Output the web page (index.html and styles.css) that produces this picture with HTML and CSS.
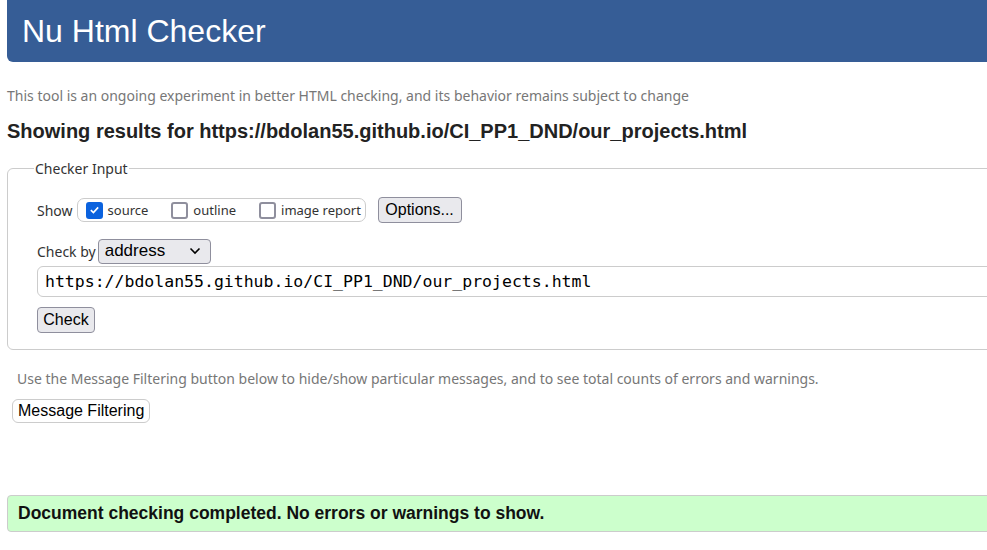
FILE: index.html
```html
<!DOCTYPE html>
<html>
<head>
<meta charset="utf-8">
<link rel="stylesheet" href="styles.css">
</head>
<body>
<div class="page">
  <h1 class="banner">Nu Html Checker</h1>
  <p class="tagline">This tool is an ongoing experiment in better HTML checking, and its behavior remains subject to change</p>
  <h2 class="results">Showing results for https://bdolan55.github.io/CI_PP1_DND/our_projects.html</h2>
  <fieldset class="input">
    <legend>Checker Input</legend>
    <div class="row show-row">
      <span class="lbl">Show</span>
      <div class="pill">
        <label class="opt"><span class="cb checked"><svg viewBox="0 0 16 16" width="16" height="16"><path d="M3.5 8.2 L6.7 11.2 L12.5 4.8" fill="none" stroke="#fff" stroke-width="2"/></svg></span>source</label>
        <label class="opt o2"><span class="cb"></span>outline</label>
        <label class="opt o3"><span class="cb"></span>image report</label>
      </div>
      <button class="btn options">Options...</button>
    </div>
    <div class="row by-row">
      <span class="lbl">Check by</span>
      <div class="select">address<svg class="chev" viewBox="0 0 12 8" width="12" height="8"><path d="M1.5 1.5 L6 6 L10.5 1.5" fill="none" stroke="#000" stroke-width="1.6"/></svg></div>
    </div>
    <div class="url">https://bdolan55.github.io/CI_PP1_DND/our_projects.html</div>
    <button class="btn check">Check</button>
  </fieldset>
  <p class="hint">Use the Message Filtering button below to hide/show particular messages, and to see total counts of errors and warnings.</p>
  <button class="filter">Message Filtering</button>
  <div class="success">Document checking completed. No errors or warnings to show.</div>
</div>
</body>
</html>
```
FILE: styles.css
```css
html, body { margin: 0; padding: 0; background: #fff; overflow: hidden; }
body { font-family: "Liberation Sans", Arial, sans-serif; }
.page { width: 1100px; padding-left: 7px; }
.banner {
  margin: -2px 0 0; height: 64px; box-sizing: border-box;
  background: #365d96; color: #fff; font-weight: normal;
  font-size: 32px; line-height: 66px; padding-left: 15px;
  border-radius: 0 0 6px 6px;
}
.tagline {
  margin: 24px 0 0; color: #777; font-family: "Noto Sans", sans-serif;
  font-size: 14px; line-height: 20px;
}
.results { margin: 12px 0 0; font-size: 20px; line-height: 26px; color: #222; }
.input {
  margin: 15px 0 0; border: 1px solid #ccc; border-radius: 6px;
  padding: 4px 0 16px 29px; min-width: 0;
}
.input legend {
  font-family: "Noto Sans", sans-serif; font-size: 14px; color: #333; padding: 0 1px; margin-left: -3px;
}
.row { display: flex; align-items: center; font-family: "Noto Sans", sans-serif; font-size: 14px; color: #333; }
.show-row { height: 28px; margin-top: 14px; }
.lbl { margin-right: 4px; white-space: nowrap; }
.pill {
  display: flex; align-items: center; height: 22px; border: 1px solid #ccc; border-radius: 7px;
  padding: 0 8px; white-space: nowrap; width: 271px; box-sizing: content-box;
}
.opt { display: flex; align-items: center; font-size: 13px; color: #333; white-space: nowrap; flex: none; }
.opt.o2 { margin-left: 23px; }
.opt.o3 { margin-left: 23px; }
.cb {
  width: 13px; height: 13px; border: 2px solid #8f8f9d; border-radius: 3px; margin-right: 5px;
  display: inline-flex; align-items: center; justify-content: center; flex: none;
}
.cb.checked { background: #0b62de; border-color: #0b62de; }
.cb svg { width: 14px; height: 14px; }
.btn {
  font-family: "Liberation Sans", Arial, sans-serif; font-size: 16px; color: #000;
  background: #e9e9ed; border: 1px solid #8f8f9d; border-radius: 4px; padding: 0 6px;
}
.options { margin-left: 12px; height: 26px; width: 84px; }
.by-row { margin-top: 14px; height: 26px; }
.by-row .lbl { margin-right: 2px; }
.select {
  display: flex; align-items: center; justify-content: space-between; box-sizing: border-box;
  width: 113px; height: 25px; border: 1px solid #8f8f9d; border-radius: 4px; background: #e9e9ed;
  font-family: "Liberation Sans", Arial, sans-serif; font-size: 17px; color: #000; padding: 0 9px 0 6px;
}
.chev { display: block; }
.url {
  margin-top: 2px; height: 31px; box-sizing: border-box; border: 1px solid #ccc; border-radius: 6px;
  font-family: "DejaVu Sans Mono", monospace; font-size: 16.5px; line-height: 29px; padding-left: 7px; color: #000;
  margin-right: -40px;
}
.check { display: block; margin-top: 10px; height: 26px; width: 58px; padding: 0; font-size: 16px; }
.hint {
  margin: 19px 0 0 10px; color: #777; font-family: "Noto Sans", sans-serif; font-size: 14px; line-height: 20px;
}
.filter {
  display: block; margin: 10px 0 0 5px; height: 24px; padding: 0 5px; background: #fff;
  border: 1px solid #ccc; border-radius: 6px; font-family: "Liberation Sans", Arial, sans-serif; font-size: 16px; color: #000;
}
.success {
  margin-top: 72px; height: 37px; box-sizing: border-box; background: #ccffcc; border: 1px solid #ccc;
  border-radius: 4px; font-weight: bold; font-size: 17.5px; line-height: 35px; padding-left: 10px; color: #111;
}
```
